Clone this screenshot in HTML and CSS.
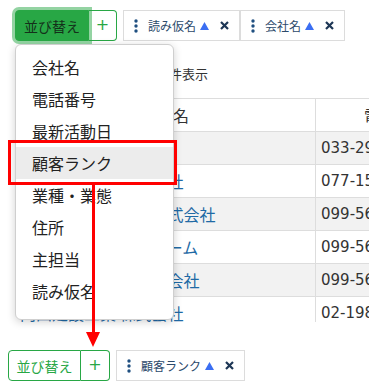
FILE: index.html
```html
<!DOCTYPE html>
<html lang="ja">
<head>
<meta charset="utf-8">
<title>並び替え</title>
<link rel="stylesheet" href="styles.css">
</head>
<body>
<div class="stage">
  <div class="toolbar toolbar-top">
    <div class="btn-group">
      <button class="btn btn-sort is-active">並び替え</button>
      <button class="btn btn-add">+</button>
    </div>
    <div class="chips">
      <span class="chip">
        <svg class="ico-dots" width="4" height="14" viewBox="0 0 4 14"><circle cx="2" cy="2" r="1.7"/><circle cx="2" cy="7" r="1.7"/><circle cx="2" cy="12" r="1.7"/></svg>
        <span class="chip-label">読み仮名</span>
        <svg class="ico-asc" width="9" height="8" viewBox="0 0 9 8"><polygon points="4.5,0 9,8 0,8"/></svg>
        <svg class="ico-x" width="9" height="9" viewBox="0 0 9 9"><path d="M1 1 L8 8 M8 1 L1 8"/></svg>
      </span>
      <span class="chip">
        <svg class="ico-dots" width="4" height="14" viewBox="0 0 4 14"><circle cx="2" cy="2" r="1.7"/><circle cx="2" cy="7" r="1.7"/><circle cx="2" cy="12" r="1.7"/></svg>
        <span class="chip-label">会社名</span>
        <svg class="ico-asc" width="9" height="8" viewBox="0 0 9 8"><polygon points="4.5,0 9,8 0,8"/></svg>
        <svg class="ico-x" width="9" height="9" viewBox="0 0 9 9"><path d="M1 1 L8 8 M8 1 L1 8"/></svg>
      </span>
    </div>
  </div>

  <div class="info">全 56 件中 1〜10件表示</div>

  <div class="table-wrap">
    <table class="grid">
      <colgroup><col class="c-name"><col class="c-tel"></colgroup>
      <thead>
        <tr><th class="name">会社名</th><th>電話番号</th></tr>
      </thead>
      <tbody>
        <tr><td class="name"><a href="#">株式会社 青山企画</a></td><td class="tel">033-2951-4810</td></tr>
        <tr><td class="name"><a href="#">大阪精密工業 株式会社</a></td><td class="tel">077-1538-2204</td></tr>
        <tr><td class="name"><a href="#">名古屋精機製作所 株式会社</a></td><td class="tel">099-5602-1187</td></tr>
        <tr><td class="name"><a href="#">株式会社 グリーンホーム</a></td><td class="tel">099-5617-3390</td></tr>
        <tr><td class="name"><a href="#">東日本電設工業 株式会社</a></td><td class="tel">099-5624-0075</td></tr>
        <tr><td class="name"><a href="#">内田建設工業 株式会社</a></td><td class="tel">02-1984-6621</td></tr>
      </tbody>
    </table>
  </div>

  <div class="toolbar toolbar-bottom">
    <div class="btn-group">
      <button class="btn btn-sort">並び替え</button>
      <button class="btn btn-add">+</button>
    </div>
    <div class="chips">
      <span class="chip">
        <svg class="ico-dots" width="4" height="14" viewBox="0 0 4 14"><circle cx="2" cy="2" r="1.7"/><circle cx="2" cy="7" r="1.7"/><circle cx="2" cy="12" r="1.7"/></svg>
        <span class="chip-label">顧客ランク</span>
        <svg class="ico-asc" width="9" height="8" viewBox="0 0 9 8"><polygon points="4.5,0 9,8 0,8"/></svg>
        <svg class="ico-x" width="9" height="9" viewBox="0 0 9 9"><path d="M1 1 L8 8 M8 1 L1 8"/></svg>
      </span>
    </div>
  </div>

  <ul class="menu">
    <li>会社名</li>
    <li>電話番号</li>
    <li>最新活動日</li>
    <li class="is-hover">顧客ランク</li>
    <li>業種・業態</li>
    <li>住所</li>
    <li>主担当</li>
    <li>読み仮名</li>
  </ul>

  <div class="callout-box"></div>
  <div class="callout-arrow"><span class="shaft"></span><span class="head"></span></div>
</div>
</body>
</html>
```

FILE: styles.css
```css
* { box-sizing: border-box; }

body {
  margin: 0;
  background: #fff;
  color: #222;
  font-family: "DejaVu Sans", "Noto Sans CJK JP", sans-serif;
}

.stage {
  position: relative;
  width: 373px;
  height: 387px;
  overflow: hidden;
}

/* toolbars */
.toolbar {
  display: flex;
  align-items: center;
  gap: 6px;
  height: 31px;
}
.toolbar-top { margin: 10px 0 0 15px; }
.toolbar-bottom { margin: 28px 0 0 8px; }

.btn-group {
  display: flex;
  height: 31px;
}

.btn {
  display: flex;
  align-items: center;
  justify-content: center;
  height: 31px;
  margin: 0;
  padding: 0;
  background: #fff;
  color: #28a745;
  border: 1px solid #28a745;
  font-family: "Noto Sans CJK JP", sans-serif;
  font-size: 14px;
  line-height: 1;
}
.btn-sort {
  width: 73px;
  border-radius: 4px 0 0 4px;
}
.toolbar-top .btn-sort { width: 74px; }
.btn-add {
  width: 29px;
  border-left: none;
  border-radius: 0 4px 4px 0;
  font-family: "DejaVu Sans", sans-serif;
  font-size: 16px;
  padding-bottom: 1px;
}
.toolbar-top .btn-add { width: 28px; }

.btn-sort.is-active {
  position: relative;
  z-index: 1;
  background: #28a745;
  color: #14301a;
  box-shadow: 0 0 0 3px rgba(40, 167, 69, 0.5);
}

/* chips */
.chips { display: flex; }

.chip {
  display: flex;
  align-items: center;
  height: 31px;
  padding: 0 10px;
  border: 1px solid #dcdcdc;
  background: #fff;
  font-family: "Noto Sans CJK JP", sans-serif;
  font-size: 12px;
  line-height: 1;
  color: #2c4a6b;
}
.chip-label { margin: 0 4px 0 10px; }
.ico-dots { fill: #1f4f80; }
.ico-asc { fill: #3b6ef2; margin-right: 11px; }
.ico-x { fill: none; stroke: #1d3655; stroke-width: 2.2; }

/* info */
.info {
  width: 208px;
  height: 57px;
  padding-top: 23px;
  text-align: right;
  font-family: "Noto Sans CJK JP", sans-serif;
  font-size: 13px;
  line-height: 20px;
  color: #333;
}

/* table */
.table-wrap {
  margin-left: 15px;
  width: 354px;
  height: 224px;
  overflow: hidden;
}
.grid {
  width: 461px;
  table-layout: fixed;
  border-collapse: separate;
  border-spacing: 0;
  font-family: "Noto Sans CJK JP", sans-serif;
  font-size: 16px;
}
.c-name { width: 301px; }
.c-tel { width: 160px; }

.grid th,
.grid td {
  padding: 5px 5px 4px;
  line-height: 23px;
  border-bottom: 1px solid #ddd;
  white-space: nowrap;
  overflow: hidden;
  text-align: left;
}
.grid th {
  border-top: 1px solid #ddd;
  font-weight: normal;
  text-align: center;
  color: #333;
}
.grid .name { border-right: 1px solid #ddd; }
.grid tbody tr:nth-child(odd) td { background: #f2f2f2; }
.grid a {
  color: #1f6aa5;
  text-decoration: none;
}
.grid td.tel {
  font-family: "DejaVu Sans", sans-serif;
  font-size: 15px;
  color: #333;
}

/* dropdown menu */
.menu {
  position: absolute;
  left: 15px;
  top: 44px;
  width: 159px;
  margin: 0;
  padding: 6px 0 12px;
  list-style: none;
  background: #fff;
  border: 1px solid #cfcfcf;
  border-radius: 6px;
  box-shadow: 0 2px 8px rgba(0, 0, 0, 0.18);
  font-family: "Noto Sans CJK JP", sans-serif;
  font-size: 16px;
  color: #222;
}
.menu li {
  height: 32px;
  line-height: 32px;
  padding-left: 16px;
}
.menu li.is-hover { background: #ececec; }

/* annotation */
.callout-box {
  position: absolute;
  left: 8px;
  top: 140px;
  width: 169px;
  height: 45px;
  border: 3px solid #f00;
}
.callout-arrow {
  position: absolute;
  left: 86px;
  top: 185px;
  width: 14px;
  display: flex;
  flex-direction: column;
  align-items: center;
}
.callout-arrow .shaft {
  width: 3px;
  height: 147px;
  background: #f00;
}
.callout-arrow .head {
  width: 0;
  height: 0;
  border-left: 7px solid transparent;
  border-right: 7px solid transparent;
  border-top: 15px solid #f00;
}
```
